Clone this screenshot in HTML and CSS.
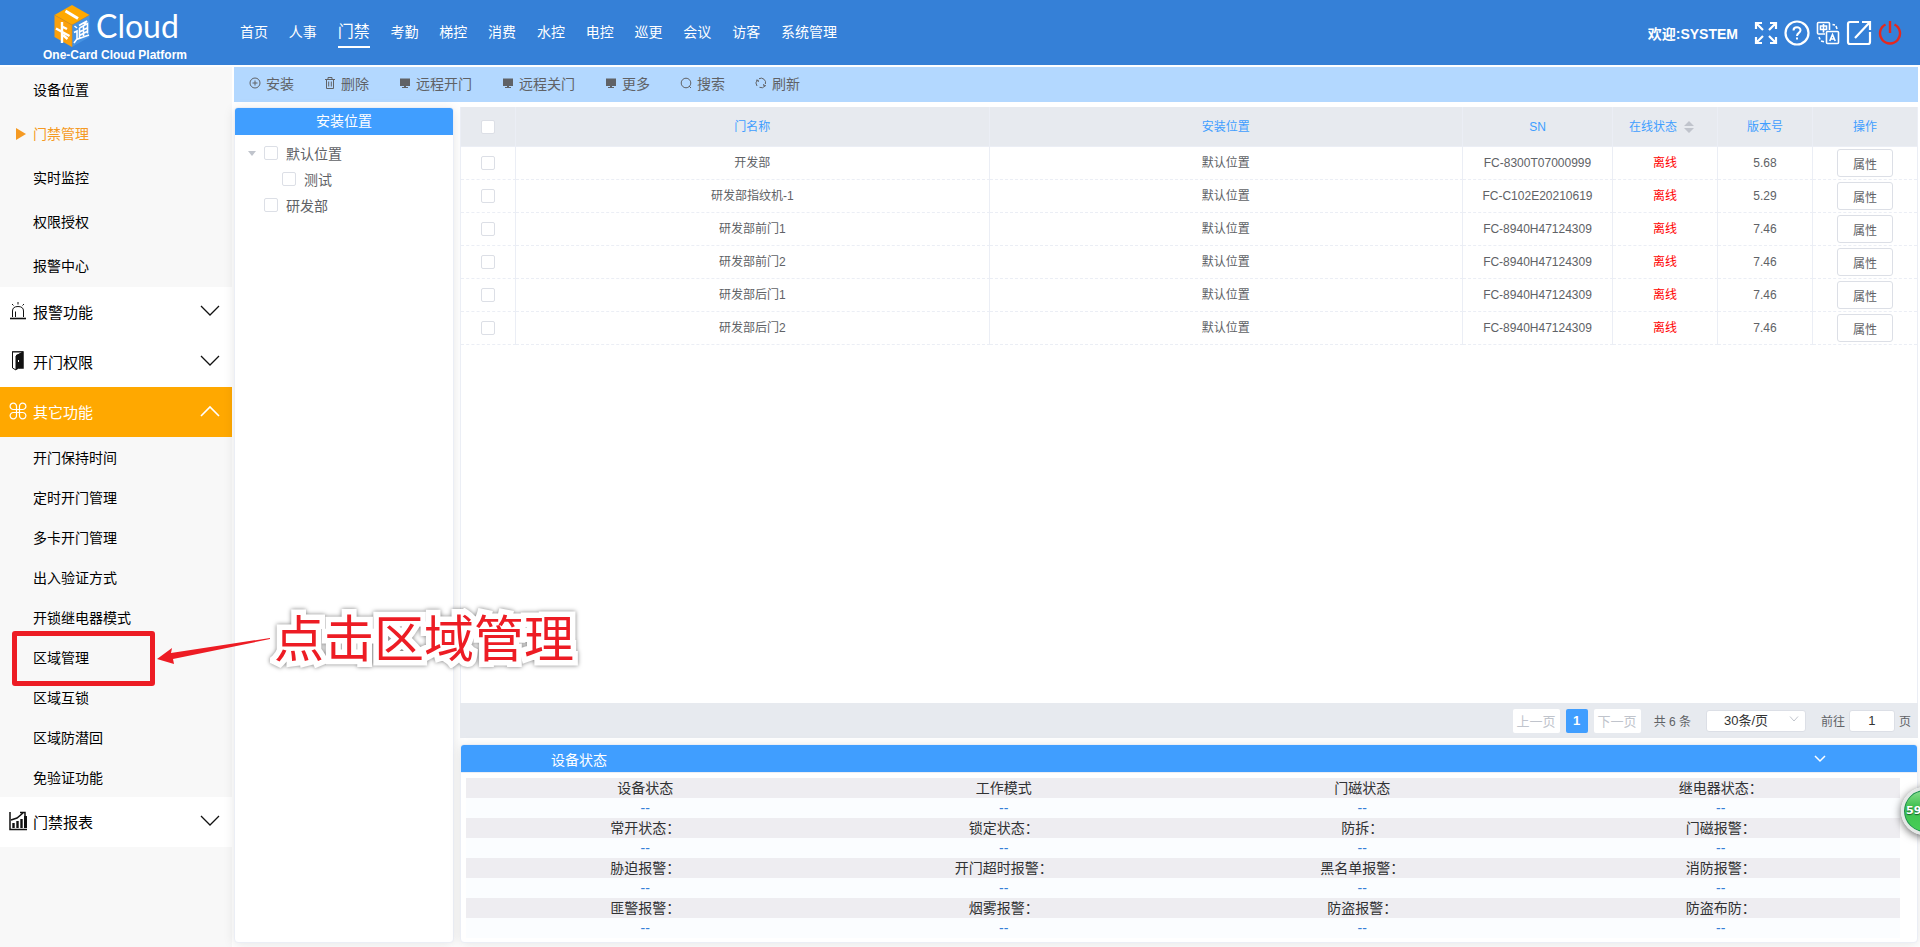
FILE: index.html
```html
<!DOCTYPE html>
<html lang="zh-CN">
<head>
    <meta charset="UTF-8">
    <meta name="viewport" content="width=device-width, initial-scale=1.0">
    <title>One-Card Cloud Platform</title>
    <link rel="stylesheet" href="styles.css">
</head>
<body>
    <header class="header">
        <div class="logo">
            <div class="logo-top">
                <svg class="logo-cube" width="36" height="42" viewBox="0 0 36 42">
                    <path d="M18 0L35.500 10L18 20L0.500 10Z" fill="#ffa800"/>
                    <path d="M0.500 10L18 20V42L0.500 32Z" fill="#fba00c"/>
                    <path d="M18 20L35.500 10V32L18 42Z" fill="#4592e2"/>
                    <path d="M0.500 10L18 20L35.500 10M18 20V42" fill="none" stroke="#d98a10" stroke-width="0.600"/>
                    <path d="M11.500 6L24 13.500" stroke="#fff" stroke-width="3"/>
                    <path d="M8 17V26M8 21.500L13 24M2 23.500L15.500 31M8 27V38M9 30L13.500 34" stroke="#fff" stroke-width="2.400" fill="none"/>
                    <path d="M20.500 21L23 23M20 27.500L23 26V34L20 38M22.500 34.500L35 30M25 20.500L33 16L30 19.500M25.500 23V33.500M25.500 23L33.500 18.500V28.500M25.500 27L33 23M25.500 30.500L33 26.500M29.500 21V31" stroke="#fff" stroke-width="1.600" fill="none"/>
                </svg>
                <span class="logo-name">Cloud</span>
            </div>
            <div class="logo-sub">One-Card Cloud Platform</div>
        </div>
        <nav class="nav">
            <a href="#">首页</a>
            <a href="#">人事</a>
            <a href="#" class="active">门禁</a>
            <a href="#">考勤</a>
            <a href="#">梯控</a>
            <a href="#">消费</a>
            <a href="#">水控</a>
            <a href="#">电控</a>
            <a href="#">巡更</a>
            <a href="#">会议</a>
            <a href="#">访客</a>
            <a href="#">系统管理</a>
        </nav>
        <div class="user">
            <span class="welcome">欢迎:SYSTEM</span>
            <button class="icon-btn" aria-label="全屏">
                <svg width="24" height="24" viewBox="0 0 24 24" fill="none" stroke="#fff" stroke-width="2.200">
                    <path d="M2 8V2H8M2 2L9 9M16 2H22V8M22 2L15 9M2 16V22H8M2 22L9 15M22 16V22H16M22 22L15 15"/>
                </svg>
            </button>
            <button class="icon-btn" aria-label="帮助">
                <svg width="26" height="26" viewBox="0 0 26 26" fill="none" stroke="#fff" stroke-width="2.200">
                    <circle cx="13" cy="13" r="11.500"/>
                    <path d="M9.500 10.500C9.500 6.300 16.500 6.300 16.500 10.300C16.500 13 13 12.800 13 16M13 17.500V19.500" stroke-width="2"/>
                </svg>
            </button>
            <button class="icon-btn" aria-label="语言">
                <svg width="24" height="24" viewBox="0 0 24 24" fill="none" stroke="#fff" stroke-width="1.600">
                    <path d="M9 13H2.500Q1.500 13 1.500 12V2.500Q1.500 1.500 2.500 1.500H12.500Q13.500 1.500 13.500 2.500V9"/>
                    <path d="M4.500 5H10.500V8.500H4.500ZM7.500 3V11.500"/>
                    <rect x="10.500" y="10.500" width="12" height="12" rx="1"/>
                    <path d="M13.800 20L16.500 13.500L19.200 20M14.500 18H18.500M16.500 3.500L19 4M20 5L21 8M3 16L4 18.500M5 20L8 20.800"/>
                </svg>
            </button>
            <button class="icon-btn" aria-label="打开">
                <svg width="26" height="26" viewBox="0 0 26 26" fill="none" stroke="#fff" stroke-width="2.200">
                    <path d="M13 2H4Q2 2 2 4V22Q2 24 4 24H22Q24 24 24 22V12M16 2H24V10M24 2L9 18"/>
                </svg>
            </button>
            <button class="icon-btn" aria-label="退出">
                <svg width="24" height="26" viewBox="0 0 24 26" fill="none" stroke="#e5281e" stroke-width="2.400">
                    <path d="M7.500 4.500A10 10 0 1 0 16.500 4.500M12 1V13"/>
                </svg>
            </button>
        </div>
    </header>

    <div class="layout">
        <aside class="sidebar">
            <ul class="menu menu-main">
                <li><a href="#">设备位置</a></li>
                <li><a href="#" class="current">门禁管理</a></li>
                <li><a href="#">实时监控</a></li>
                <li><a href="#">权限授权</a></li>
                <li><a href="#">报警中心</a></li>
            </ul>
            <button class="group">
                <svg width="18" height="18" viewBox="0 0 18 18" fill="none" stroke="#111">
                    <path d="M1 16.500H17" stroke-width="1.600"/>
                    <path d="M3.500 15V9Q3.500 4.500 9 4.500Q14.500 4.500 14.500 9V15M6.500 15V9.500M9 0V2.500M3 2L4.500 3.500M15 2L13.500 3.500"/>
                </svg>
                <span>报警功能</span>
                <svg class="chevron" width="20" height="12" viewBox="0 0 20 12" fill="none" stroke="#111" stroke-width="1.300"><path d="M1 1L10 10L19 1"/></svg>
            </button>
            <button class="group">
                <svg width="18" height="20" viewBox="0 0 18 20">
                    <path d="M3 1H14V17H10" fill="none" stroke="#111" stroke-width="1.500"/>
                    <path d="M3.500 1V17L7 19V5L14 1Z" fill="#fff" stroke="#111"/>
                    <path d="M7 4L14 1V17H11L7 19Z" fill="#111"/>
                    <path d="M9.500 9V11" stroke="#fff"/>
                </svg>
                <span>开门权限</span>
                <svg class="chevron" width="20" height="12" viewBox="0 0 20 12" fill="none" stroke="#111" stroke-width="1.300"><path d="M1 1L10 10L19 1"/></svg>
            </button>
            <button class="group open">
                <svg width="18" height="18" viewBox="0 0 18 18" fill="none" stroke="#fff" stroke-width="1.200">
                    <path d="M7.500 7.500H4.500A3.200 3.200 0 1 1 7.500 4.500ZM10.500 7.500V4.500A3.200 3.200 0 1 1 13.500 7.500ZM7.500 10.500V13.500A3.200 3.200 0 1 1 4.500 10.500ZM10.500 10.500H13.500A3.200 3.200 0 1 1 10.500 13.500ZM7.500 7.500H10.500V10.500H7.500Z"/>
                </svg>
                <span>其它功能</span>
                <svg class="chevron" width="20" height="12" viewBox="0 0 20 12" fill="none" stroke="#fff" stroke-width="1.600"><path d="M1 11L10 2L19 11"/></svg>
            </button>
            <ul class="menu menu-sub">
                <li><a href="#">开门保持时间</a></li>
                <li><a href="#">定时开门管理</a></li>
                <li><a href="#">多卡开门管理</a></li>
                <li><a href="#">出入验证方式</a></li>
                <li><a href="#">开锁继电器模式</a></li>
                <li><a href="#">区域管理</a></li>
                <li><a href="#">区域互锁</a></li>
                <li><a href="#">区域防潜回</a></li>
                <li><a href="#">免验证功能</a></li>
            </ul>
            <button class="group">
                <svg width="18" height="20" viewBox="0 0 18 20" fill="none" stroke="#111">
                    <path d="M1 1V18.500H18" stroke-width="1.500"/>
                    <path d="M4.500 17V12M8.500 17V10M12.500 17V8" stroke-width="2.400"/>
                    <path d="M16.500 17V5" stroke-width="3"/>
                    <path d="M2 9L8 7L14 2M11 1.500H16V5" stroke-width="1.500"/>
                </svg>
                <span>门禁报表</span>
                <svg class="chevron" width="20" height="12" viewBox="0 0 20 12" fill="none" stroke="#111" stroke-width="1.300"><path d="M1 1L10 10L19 1"/></svg>
            </button>
        </aside>

        <main class="main">
            <div class="toolbar">
                <button>
                    <svg width="12" height="12" viewBox="0 0 12 12" fill="none" stroke="#606266"><circle cx="6" cy="6" r="5"/><path d="M6 3.500V8.500M3.500 6H8.500"/></svg>
                    安装
                </button>
                <button>
                    <svg width="12" height="12" viewBox="0 0 12 12" fill="none" stroke="#606266"><path d="M1 2.500H11M4 2.500V0.500H8V2.500M2.500 2.500V11.500H9.500V2.500M4.700 4.500V9.500M7.300 4.500V9.500"/></svg>
                    删除
                </button>
                <button>
                    <svg width="12" height="12" viewBox="0 0 12 12" fill="#606266"><path d="M1 1.500H11V9H7V10H9V11H3V10H5V9H1Z"/></svg>
                    远程开门
                </button>
                <button>
                    <svg width="12" height="12" viewBox="0 0 12 12" fill="#606266"><path d="M1 1.500H11V9H7V10H9V11H3V10H5V9H1Z"/></svg>
                    远程关门
                </button>
                <button>
                    <svg width="12" height="12" viewBox="0 0 12 12" fill="#606266"><path d="M1 1.500H11V9H7V10H9V11H3V10H5V9H1Z"/></svg>
                    更多
                </button>
                <button>
                    <svg width="12" height="12" viewBox="0 0 12 12" fill="none" stroke="#606266"><circle cx="6" cy="6" r="4.800"/><path d="M9 9L11 11"/></svg>
                    搜索
                </button>
                <button>
                    <svg width="12" height="12" viewBox="0 0 12 12" fill="none" stroke="#606266"><path d="M2 9A4.500 4.500 0 0 1 2.500 3M4 1.700A4.500 4.500 0 0 1 10.400 7M10 9A4.500 4.500 0 0 1 4.500 10.300M1 3.200H3.300V5M11 8.700H8.700V7"/></svg>
                    刷新
                </button>
            </div>

            <div class="content">
                <section class="card tree">
                    <h2 class="card-title">安装位置</h2>
                    <ul class="tree-list">
                        <li>
                            <label class="node"><span class="caret"></span><input type="checkbox">默认位置</label>
                            <ul>
                                <li><label class="node"><input type="checkbox">测试</label></li>
                            </ul>
                        </li>
                        <li><label class="node"><span class="caret hidden"></span><input type="checkbox">研发部</label></li>
                    </ul>
                </section>

                <div class="right">
                    <div class="table-wrap">
                        <table class="door-table">
                            <colgroup>
                                <col class="col-check">
                                <col>
                                <col>
                                <col class="col-sn">
                                <col class="col-state">
                                <col class="col-version">
                                <col class="col-action">
                            </colgroup>
                            <thead>
                                <tr>
                                    <th><input type="checkbox" aria-label="全选"></th>
                                    <th>门名称</th>
                                    <th>安装位置</th>
                                    <th>SN</th>
                                    <th>
                                        <span class="sortable">在线状态
                                            <svg width="10" height="12" viewBox="0 0 10 12" fill="#c0c4cc"><path d="M0 5L5 0L10 5ZM0 7L5 12L10 7Z"/></svg>
                                        </span>
                                    </th>
                                    <th>版本号</th>
                                    <th>操作</th>
                                </tr>
                            </thead>
                            <tbody>
                                <tr>
                                    <td><input type="checkbox" aria-label="选择"></td>
                                    <td>开发部</td>
                                    <td>默认位置</td>
                                    <td>FC-8300T07000999</td>
                                    <td class="offline">离线</td>
                                    <td>5.68</td>
                                    <td><button class="attr-btn">属性</button></td>
                                </tr>
                                <tr>
                                    <td><input type="checkbox" aria-label="选择"></td>
                                    <td>研发部指纹机-1</td>
                                    <td>默认位置</td>
                                    <td>FC-C102E20210619</td>
                                    <td class="offline">离线</td>
                                    <td>5.29</td>
                                    <td><button class="attr-btn">属性</button></td>
                                </tr>
                                <tr>
                                    <td><input type="checkbox" aria-label="选择"></td>
                                    <td>研发部前门1</td>
                                    <td>默认位置</td>
                                    <td>FC-8940H47124309</td>
                                    <td class="offline">离线</td>
                                    <td>7.46</td>
                                    <td><button class="attr-btn">属性</button></td>
                                </tr>
                                <tr>
                                    <td><input type="checkbox" aria-label="选择"></td>
                                    <td>研发部前门2</td>
                                    <td>默认位置</td>
                                    <td>FC-8940H47124309</td>
                                    <td class="offline">离线</td>
                                    <td>7.46</td>
                                    <td><button class="attr-btn">属性</button></td>
                                </tr>
                                <tr>
                                    <td><input type="checkbox" aria-label="选择"></td>
                                    <td>研发部后门1</td>
                                    <td>默认位置</td>
                                    <td>FC-8940H47124309</td>
                                    <td class="offline">离线</td>
                                    <td>7.46</td>
                                    <td><button class="attr-btn">属性</button></td>
                                </tr>
                                <tr>
                                    <td><input type="checkbox" aria-label="选择"></td>
                                    <td>研发部后门2</td>
                                    <td>默认位置</td>
                                    <td>FC-8940H47124309</td>
                                    <td class="offline">离线</td>
                                    <td>7.46</td>
                                    <td><button class="attr-btn">属性</button></td>
                                </tr>
                            </tbody>
                        </table>
                    </div>

                    <div class="pagination">
                        <button class="page-btn" disabled>上一页</button>
                        <button class="page-num">1</button>
                        <button class="page-btn" disabled>下一页</button>
                        <span class="total">共 6 条</span>
                        <span class="size">
                            <select aria-label="每页条数">
                                <option>30条/页</option>
                            </select>
                            <svg width="10" height="6" viewBox="0 0 10 6" fill="none" stroke="#c0c4cc"><path d="M1 0.500L5 5L9 0.500"/></svg>
                        </span>
                        <label class="jump">前往<input type="text" value="1">页</label>
                    </div>

                    <section class="card status">
                        <div class="status-title">
                            <span>设备状态</span>
                            <button aria-label="收起">
                                <svg width="12" height="8" viewBox="0 0 12 8" fill="none" stroke="#fff" stroke-width="1.500"><path d="M1 1L6 6L11 1"/></svg>
                            </button>
                        </div>
                        <table class="status-table">
                            <tr><th>设备状态</th><th>工作模式</th><th>门磁状态</th><th>继电器状态：</th></tr>
                            <tr><td>--</td><td>--</td><td>--</td><td>--</td></tr>
                            <tr><th>常开状态：</th><th>锁定状态：</th><th>防拆：</th><th>门磁报警：</th></tr>
                            <tr><td>--</td><td>--</td><td>--</td><td>--</td></tr>
                            <tr><th>胁迫报警：</th><th>开门超时报警：</th><th>黑名单报警：</th><th>消防报警：</th></tr>
                            <tr><td>--</td><td>--</td><td>--</td><td>--</td></tr>
                            <tr><th>匪警报警：</th><th>烟雾报警：</th><th>防盗报警：</th><th>防盗布防：</th></tr>
                            <tr><td>--</td><td>--</td><td>--</td><td>--</td></tr>
                        </table>
                    </section>
                </div>
            </div>
        </main>
    </div>

    <!-- guide marks over the page -->
    <div class="mark-box"></div>
    <svg class="mark-arrow" width="116" height="30" viewBox="0 0 116 30" fill="#ed1c24">
        <path d="M1 22L16 11L15 16L114 1V2L17 22L18 27Z"/>
    </svg>
    <div class="mark-text">点击区域管理</div>
    <div class="ball">59</div>
</body>
</html>
```
FILE: styles.css
```css
* {
    box-sizing: border-box;
}
body {
    margin: 0;
    min-height: 100vh;
    display: flex;
    flex-direction: column;
    position: relative;
    overflow: hidden;
    font-family: "Liberation Sans", "Noto Sans CJK SC", sans-serif;
    font-size: 14px;
    color: #606266;
    background: #fff;
}
ul {
    list-style: none;
    margin: 0;
    padding: 0;
}
a {
    color: inherit;
    text-decoration: none;
}
button {
    font-family: inherit;
    font-size: 14px;
    color: inherit;
    background: none;
    border: none;
    padding: 0;
    cursor: pointer;
}
svg {
    display: block;
    flex-shrink: 0;
}
input[type="checkbox"] {
    appearance: none;
    display: block;
    width: 14px;
    height: 14px;
    margin: 0;
    border: 1px solid #dcdfe6;
    border-radius: 2px;
    background: #fff;
}

/* header */
.header {
    height: 65px;
    display: flex;
    align-items: center;
    background: #3580d7;
    color: #fff;
}
.logo {
    width: 240px;
    padding: 2px 0 0 43px;
    flex-shrink: 0;
}
.logo-top {
    display: flex;
    align-items: center;
    gap: 6px;
    height: 42px;
    padding-left: 11px;
}
.logo-name {
    font-family: Lato, sans-serif;
    font-size: 32px;
    line-height: 42px;
}
.logo-sub {
    font-size: 12px;
    font-weight: bold;
    line-height: 16px;
}
.nav {
    width: 597px;
    display: flex;
    justify-content: space-between;
    align-items: center;
    padding-bottom: 2px;
    line-height: 28px;
}
.nav .active {
    font-size: 16px;
    padding-top: 2px;
    border-bottom: 2px solid #fff;
}
.user {
    margin-left: auto;
    padding-right: 18px;
    display: flex;
    align-items: center;
    gap: 6px;
}
.welcome {
    font-weight: bold;
    margin-right: 10px;
}

/* sidebar */
.layout {
    flex: 1;
    display: flex;
    gap: 2px;
    padding-top: 2px;
}
.sidebar {
    width: 232px;
    flex-shrink: 0;
    background: #f8f8f8;
    color: #000;
}
.menu a {
    display: block;
    padding-top: 2px;
    padding-left: 33px;
}
.menu-main a {
    line-height: 42px;
}
.menu-sub a {
    line-height: 38px;
}
.menu .current {
    display: flex;
    align-items: center;
    gap: 7px;
    padding-left: 16px;
    color: #f59a23;
}
.current::before {
    content: "";
    border-left: 10px solid #f59a23;
    border-top: 6px solid transparent;
    border-bottom: 6px solid transparent;
}
.group {
    width: 100%;
    height: 50px;
    display: flex;
    align-items: center;
    gap: 6px;
    padding: 0 12px 2px 9px;
    font-size: 15px;
    color: #000;
    background: #fff;
}
.group.open {
    color: #fff;
    background: #ffa800;
}
.chevron {
    margin-left: auto;
}

/* main area */
.main {
    flex: 1;
    min-width: 0;
    display: flex;
    flex-direction: column;
    padding-right: 2px;
}
.toolbar {
    height: 35px;
    display: flex;
    padding-bottom: 3px;
    background: #b3d8ff;
}
.toolbar button {
    display: flex;
    align-items: center;
    gap: 5px;
    padding: 0 15px;
}
.content {
    flex: 1;
    display: flex;
    gap: 6px;
    padding: 5px 0 4px 0;
}
.card {
    background: #fff;
    border: 1px solid #ebeef5;
    border-radius: 4px;
    box-shadow: 0 2px 12px rgba(0, 0, 0, 0.1);
    overflow: hidden;
}
.tree {
    width: 220px;
    flex-shrink: 0;
}
.card-title {
    margin: 0;
    font-size: 14px;
    font-weight: normal;
    line-height: 27px;
    text-align: center;
    color: #fff;
    background: #409eff;
}
.tree-list {
    padding: 5px 0 0 13px;
}
.tree-list ul {
    padding-left: 34px;
}
.node {
    display: flex;
    align-items: center;
    gap: 8px;
    height: 26px;
}
.caret {
    border-top: 5px solid #c0c4cc;
    border-left: 4px solid transparent;
    border-right: 4px solid transparent;
}
.caret.hidden {
    visibility: hidden;
}
.right {
    flex: 1;
    min-width: 0;
    display: flex;
    flex-direction: column;
}

/* door table */
.table-wrap {
    flex: 1;
    background: #fff;
    border-left: 1px solid #ebeef5;
    border-right: 1px solid #ebeef5;
}
.door-table {
    width: 100%;
    table-layout: fixed;
    border-collapse: separate;
    border-spacing: 0;
    font-size: 12px;
    line-height: 16px;
    text-align: center;
}
.col-check {
    width: 55px;
}
.col-sn {
    width: 150px;
}
.col-state {
    width: 105px;
}
.col-version {
    width: 95px;
}
.col-action {
    width: 104px;
}
.door-table th {
    height: 40px;
    padding: 0;
    font-weight: normal;
    color: #409eff;
    background: #e7eaef;
    border-right: 1px solid #ebeef5;
    border-bottom: 1px solid #ebeef5;
}
.door-table td {
    height: 33px;
    padding: 0;
    border-right: 1px solid #ebeef5;
    border-bottom: 1px dashed #ebeef5;
}
.door-table tr > :last-child {
    border-right: none;
}
.door-table input {
    margin: 0 auto;
}
.door-table .offline {
    color: #f00;
}
.sortable {
    display: flex;
    align-items: center;
    justify-content: center;
    gap: 7px;
    padding-right: 7px;
}
.attr-btn {
    display: block;
    width: 56px;
    height: 28px;
    margin: 2px auto;
    font-size: 12px;
    background: #fff;
    border: 1px solid #dcdfe6;
    border-radius: 3px;
}

/* pagination */
.pagination {
    height: 35px;
    display: flex;
    align-items: center;
    justify-content: flex-end;
    gap: 6px;
    padding-right: 7px;
    font-size: 12px;
    background: #e7eaef;
}
.page-btn,
.page-num {
    height: 24px;
    font-size: 13px;
    border-radius: 2px;
    background: #fff;
}
.page-btn {
    width: 47px;
    color: #c0c4cc;
}
.page-num {
    width: 22px;
    font-weight: bold;
    color: #fff;
    background: #409eff;
}
.total {
    margin: 0 9px 0 7px;
}
.size {
    position: relative;
    margin-right: 9px;
}
.size select {
    appearance: none;
    display: block;
    width: 100px;
    height: 22px;
    padding: 0 0 0 17px;
    font-family: inherit;
    font-size: 13px;
    color: #333;
    background: #fff;
    border: 1px solid #dcdfe6;
    border-radius: 3px;
}
.size svg {
    position: absolute;
    right: 7px;
    top: 6px;
}
.jump {
    display: flex;
    align-items: center;
    gap: 4px;
}
.jump input {
    width: 46px;
    height: 22px;
    padding: 0;
    text-align: center;
    font-family: inherit;
    font-size: 13px;
    color: #333;
    border: 1px solid #dcdfe6;
    border-radius: 3px;
}

/* device status */
.status {
    margin-top: 6px;
}
.status-title {
    height: 28px;
    display: flex;
    align-items: center;
    justify-content: space-between;
    padding: 0 91px 0 90px;
    color: #fff;
    background: #409eff;
    border-bottom: 1px solid #ebeef5;
}
.status-table {
    width: calc(100% - 22px);
    margin: 5px 17px 4px 5px;
    table-layout: fixed;
    border-spacing: 0;
    line-height: 20px;
    text-align: center;
}
.status-table th,
.status-table td {
    height: 20px;
    padding: 0;
}
.status-table th {
    font-weight: normal;
    color: #303133;
    background: #eeedf1;
}
.status-table td {
    color: #3580d7;
    background: #fbfdff;
}

/* guide marks */
.mark-box {
    position: absolute;
    left: 12px;
    top: 631px;
    width: 143px;
    height: 55px;
    border: 5px solid #ed1c24;
    border-radius: 3px;
}
.mark-arrow {
    position: absolute;
    left: 156px;
    top: 637px;
}
.mark-text {
    position: absolute;
    left: 274px;
    top: 610px;
    font-size: 50px;
    line-height: 60px;
    color: #ed1c24;
    -webkit-text-stroke: 11px #fff;
    stroke-linejoin: round;
    paint-order: stroke fill;
    filter: drop-shadow(0 0 2px rgba(0, 0, 0, 0.5));
}
.ball {
    position: absolute;
    right: -29px;
    top: 787px;
    width: 48px;
    height: 48px;
    padding-left: 2px;
    font-family: "DejaVu Sans", sans-serif;
    font-size: 11px;
    font-weight: bold;
    line-height: 42px;
    color: #fff;
    text-shadow: 0 1px 1px #14602a;
    background: linear-gradient(#8be08f, #3fc04f 40%, #46cf57);
    border: 3px solid #e4e7e6;
    border-radius: 50%;
    box-shadow: inset 0 0 0 1px #1d8a53, 0 2px 8px rgba(0, 0, 0, 0.6);
}
```
